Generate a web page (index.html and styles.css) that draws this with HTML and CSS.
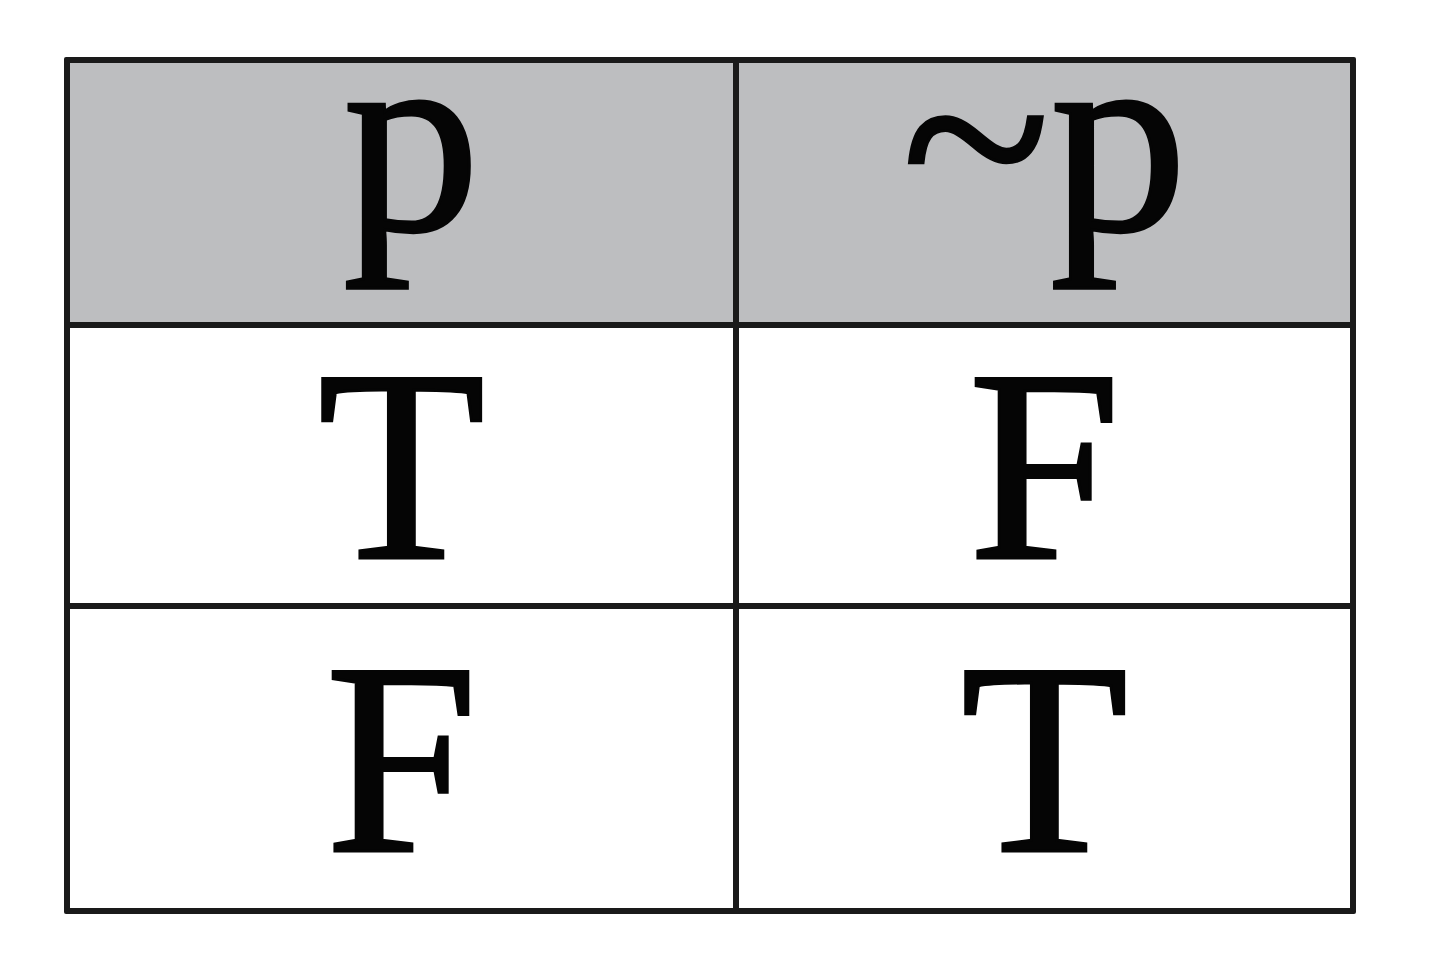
FILE: index.html
```html
<!DOCTYPE html>
<html>
<head>
<meta charset="utf-8">
<link rel="stylesheet" href="styles.css">
</head>
<body>
<div class="table">
  <div class="cell head head-p">p</div>
  <div class="cell head">~p</div>
  <div class="cell">T</div>
  <div class="cell">F</div>
  <div class="cell">F</div>
  <div class="cell">T</div>
</div>
</body>
</html>
```
FILE: styles.css
```css
html, body {
  margin: 0;
  padding: 0;
  background: #ffffff;
}
.table {
  margin: 57px 0 0 64px;
  width: max-content;
  display: grid;
  grid-template-columns: 663px 611px;
  grid-template-rows: 259px 275px 299px;
  gap: 6px;
  padding: 6px;
  background: #1a1a1a;
  border-radius: 2px;
}
.cell {
  background: #ffffff;
  display: flex;
  align-items: center;
  justify-content: center;
  box-sizing: border-box;
  font-family: "Liberation Serif", "Times New Roman", serif;
  font-size: 274px;
  line-height: 0.8;
  color: #050505;
  -webkit-text-stroke: 3px #050505;
}
.head {
  background: #bdbec0;
  align-items: flex-start;
  line-height: 0.55;
  padding-top: 0;
}
.head-p {
  padding-left: 20px;
}
```
